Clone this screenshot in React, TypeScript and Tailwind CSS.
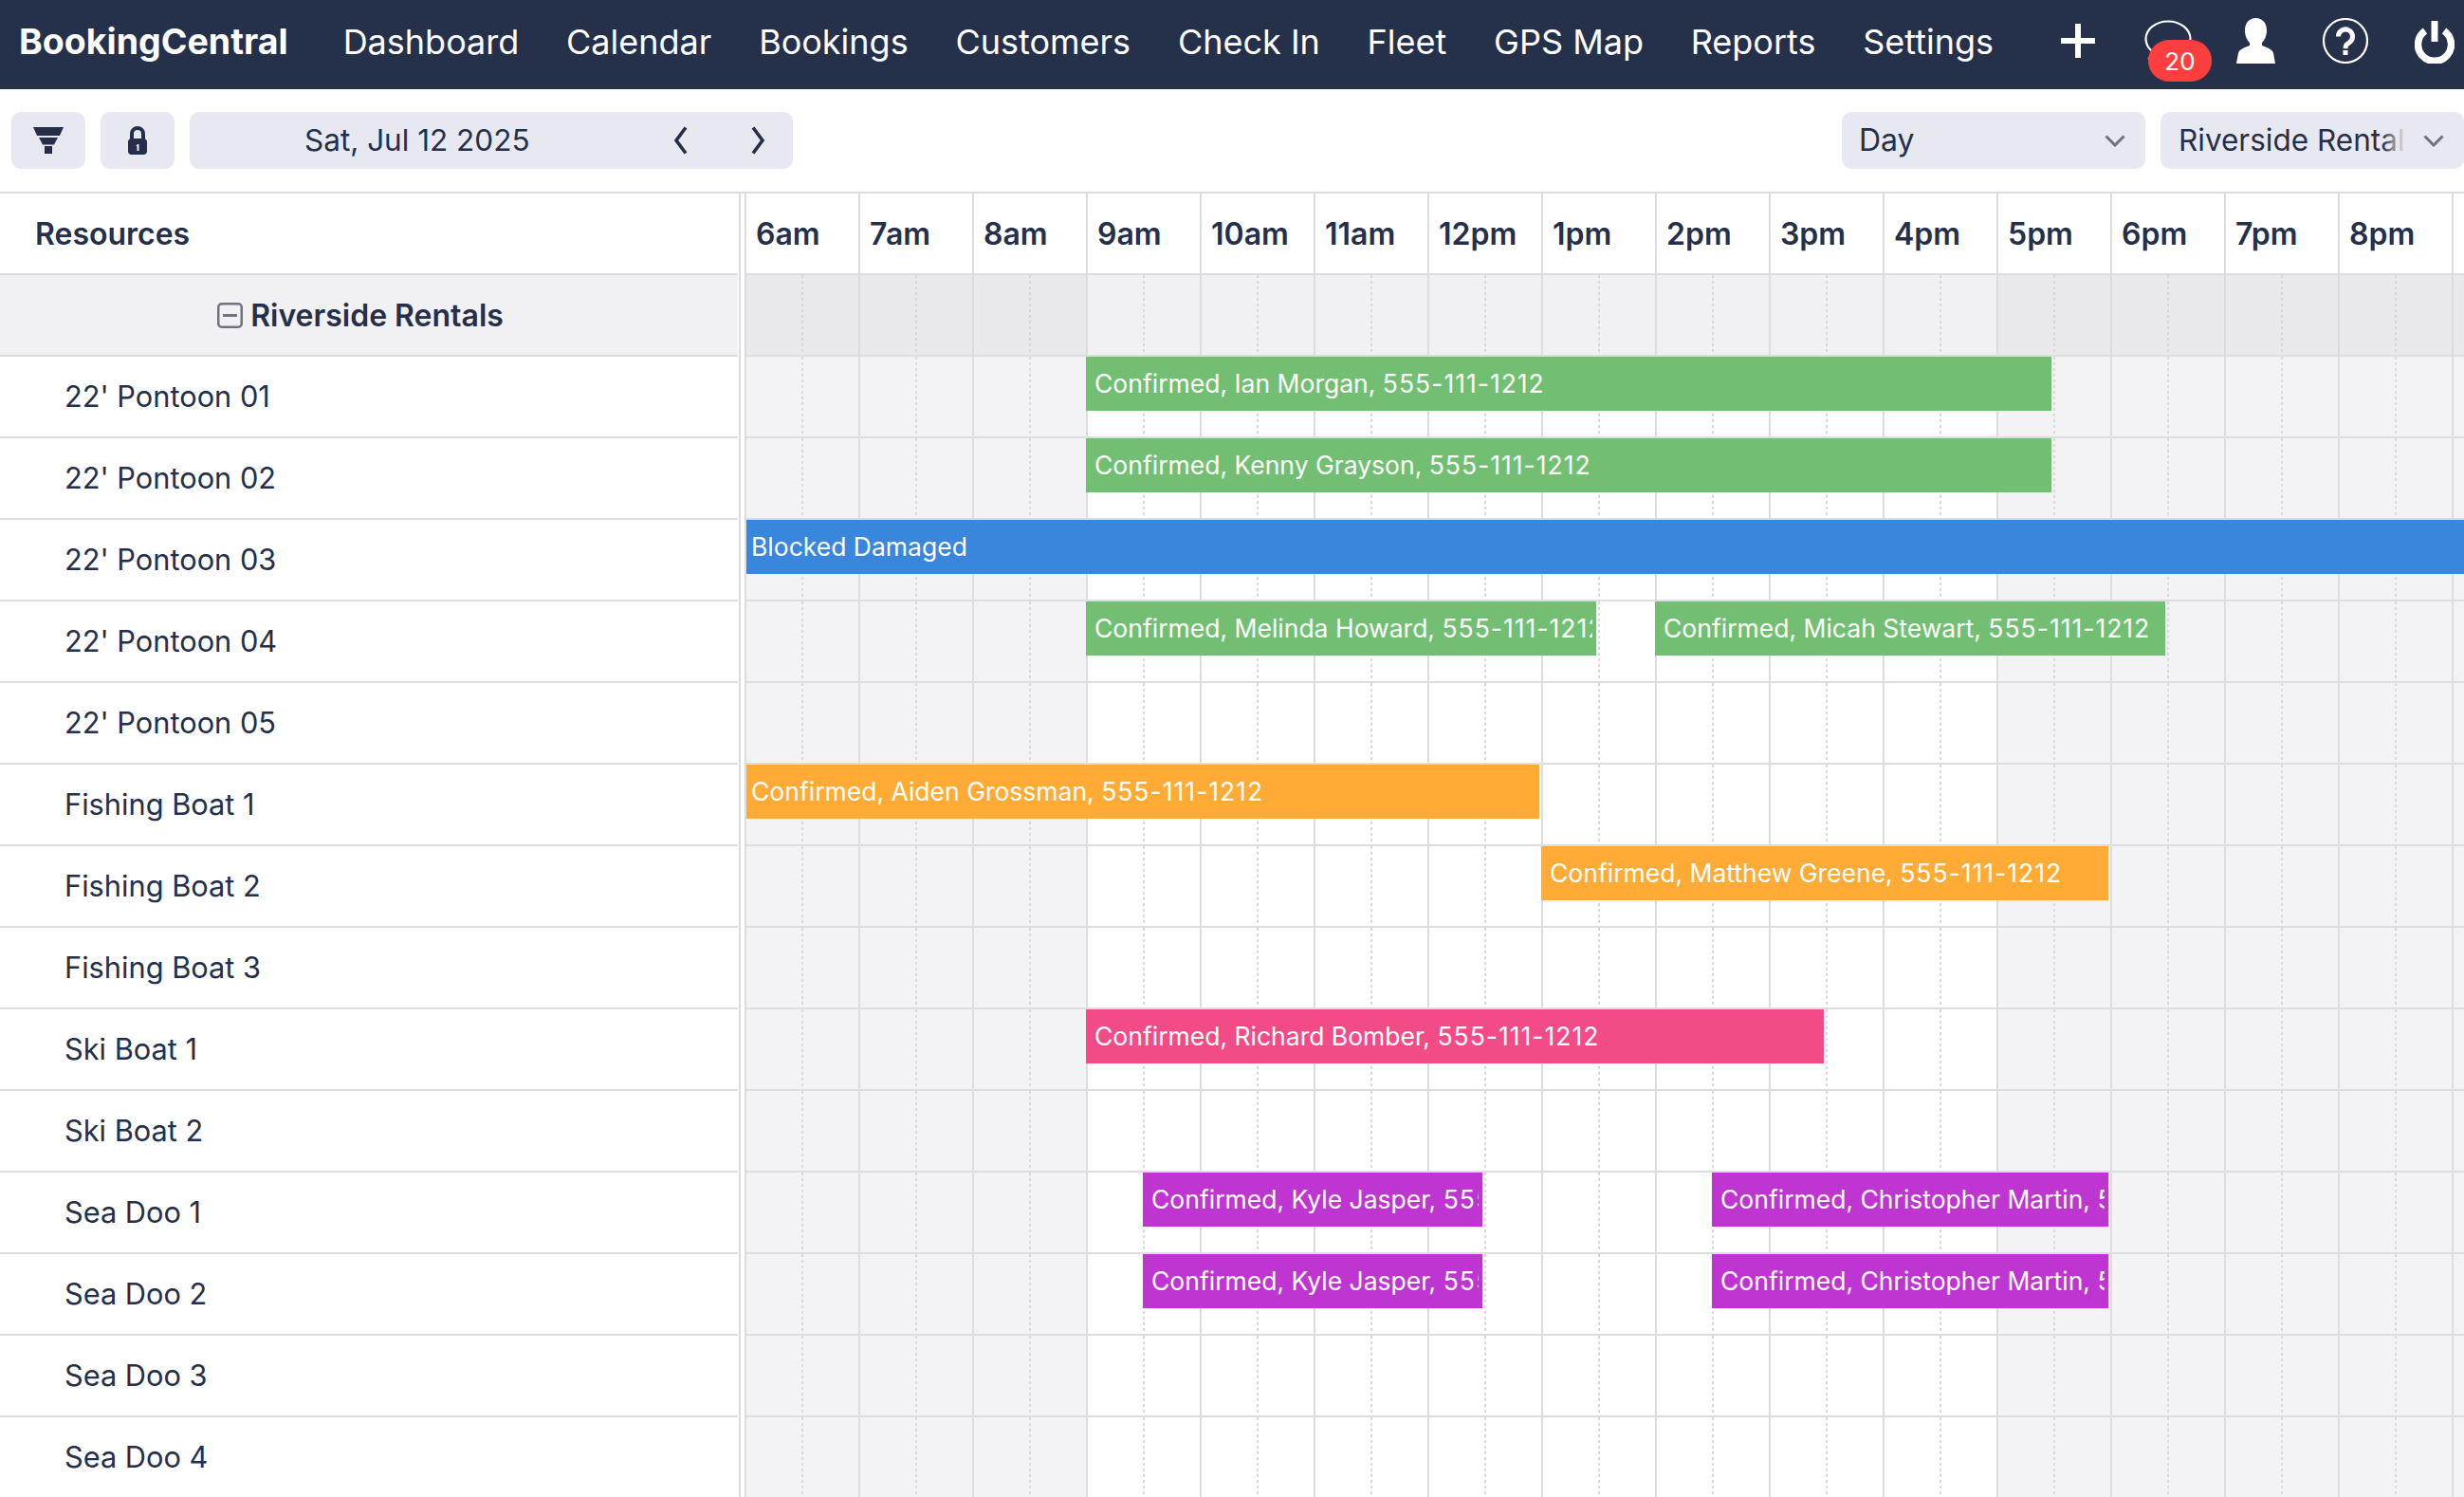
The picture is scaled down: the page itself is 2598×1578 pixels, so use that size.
import type { ReactNode } from "react";

const navItems = ["Dashboard", "Calendar", "Bookings", "Customers", "Check In", "Fleet", "GPS Map", "Reports", "Settings"];
const hours = ["6am", "7am", "8am", "9am", "10am", "11am", "12pm", "1pm", "2pm", "3pm", "4pm", "5pm", "6pm", "7pm", "8pm", "9pm"];

type Booking = { label: string; phone?: string; from: number; to: number; color: string };

const green = "bg-[#72bf73]";
const orange = "bg-[#ffab36]";
const pink = "bg-[#f34b87]";
const purple = "bg-[#bf35d2]";
const phone = "555-111-1212";

const resources: { name: string; bookings: Booking[] }[] = [
  { name: "22' Pontoon 01", bookings: [{ label: "Confirmed, Ian Morgan, ", phone, from: 3, to: 11.5, color: green }] },
  { name: "22' Pontoon 02", bookings: [{ label: "Confirmed, Kenny Grayson, ", phone, from: 3, to: 11.5, color: green }] },
  { name: "22' Pontoon 03", bookings: [{ label: "Blocked Damaged", from: 0, to: 17, color: "bg-[#3986dd]" }] },
  {
    name: "22' Pontoon 04",
    bookings: [
      { label: "Confirmed, Melinda Howard, ", phone, from: 3, to: 7.5, color: green },
      { label: "Confirmed, Micah Stewart, ", phone, from: 8, to: 12.5, color: green },
    ],
  },
  { name: "22' Pontoon 05", bookings: [] },
  { name: "Fishing Boat 1", bookings: [{ label: "Confirmed, Aiden Grossman, ", phone, from: 0, to: 7, color: orange }] },
  { name: "Fishing Boat 2", bookings: [{ label: "Confirmed, Matthew Greene, ", phone, from: 7, to: 12, color: orange }] },
  { name: "Fishing Boat 3", bookings: [] },
  { name: "Ski Boat 1", bookings: [{ label: "Confirmed, Richard Bomber, ", phone, from: 3, to: 9.5, color: pink }] },
  { name: "Ski Boat 2", bookings: [] },
  {
    name: "Sea Doo 1",
    bookings: [
      { label: "Confirmed, Kyle Jasper, ", phone, from: 3.5, to: 6.5, color: purple },
      { label: "Confirmed, Christopher Martin, ", phone, from: 8.5, to: 12, color: purple },
    ],
  },
  {
    name: "Sea Doo 2",
    bookings: [
      { label: "Confirmed, Kyle Jasper, ", phone, from: 3.5, to: 6.5, color: purple },
      { label: "Confirmed, Christopher Martin, ", phone, from: 8.5, to: 12, color: purple },
    ],
  },
  { name: "Sea Doo 3", bookings: [] },
  { name: "Sea Doo 4", bookings: [] },
];

const isOffHours = (i: number) => i < 3 || i >= 11;

function Cells({ group }: { group?: boolean }) {
  return (
    <>
      {hours.map((h, i) => (
        <div
          key={h}
          className={`w-[120px] shrink-0 border-r-2 border-[#dddcdf] ${
            group ? (isOffHours(i) ? "bg-[#e9e8eb]" : "bg-[#f1f0f3]") : isOffHours(i) ? "bg-[#f3f2f5]" : "bg-white"
          }`}
        >
          <div className="ml-[58px] h-full w-[2px] bg-[repeating-linear-gradient(to_bottom,#d9d8db_0,#d9d8db_3px,transparent_3px,transparent_6px)]" />
        </div>
      ))}
    </>
  );
}

function Bar({ b }: { b: Booking }) {
  const left = b.from === 0 ? 0 : b.from * 120 - 2;
  const right = b.to * 120 - 4;
  return (
    <div
      className={`absolute top-0 flex h-[57px] items-center overflow-hidden pr-[4px] text-[26.500px] text-white ${b.color} ${b.from === 0 ? "pl-[5px]" : "pl-[9px]"}`}
      style={{ left, width: right - left }}
    >
      <span className="overflow-hidden whitespace-pre">
        {b.label}
        {b.phone && <span className="tracking-[1px]">{b.phone}</span>}
      </span>
    </div>
  );
}

function ToolButton({ className, children }: { className: string; children: ReactNode }) {
  return <div className={`flex h-[60px] items-center rounded-[10px] bg-[#e8e9f0] ${className}`}>{children}</div>;
}

function Chevron({ d }: { d: string }) {
  return (
    <svg width="16" height="30" viewBox="0 0 16 30" fill="none" stroke="#252f4a" strokeWidth="3.6">
      <path d={d} />
    </svg>
  );
}

function SelectArrow() {
  return (
    <svg width="22" height="13" viewBox="0 0 22 13" fill="none" stroke="#6f7080" strokeWidth="3">
      <path d="M1.5 1.5 11 11l9.5-9.5" />
    </svg>
  );
}

export default function App() {
  return (
    <div className="h-[1578px] w-[2598px] overflow-hidden bg-white text-[#252f4a] [font-family:Inter,sans-serif]">
      <header className="flex h-[94px] items-center overflow-hidden whitespace-nowrap bg-[#25304b] pl-[20px] text-white">
        <div className="mb-[6px] shrink-0 text-[37.500px] font-bold">BookingCentral</div>
        <nav className="mb-[6px] ml-[58px] flex shrink-0 gap-[49.750px] text-[36px]">
          {navItems.map((n) => (
            <span key={n}>{n}</span>
          ))}
        </nav>
        <div className="relative ml-auto h-full w-[490px] shrink-0">
          {/* plus */}
          <svg className="absolute left-[65px] top-[25px]" width="36" height="36" viewBox="0 0 36 36" fill="#fff">
            <rect x="15" width="6" height="36" />
            <rect y="15" width="36" height="6" />
          </svg>
          {/* chat bubble */}
          <svg className="absolute left-[153px] top-[21px]" width="50" height="44" viewBox="0 0 50 44" fill="none" stroke="#fff" strokeWidth="2.2">
            <ellipse cx="25" cy="20" rx="23.5" ry="18.5" />
            <path d="M10 34c0 4-2 6-6 7h9" />
          </svg>
          <div className="absolute left-[157px] top-[42px] flex h-[44px] w-[67px] items-center justify-center rounded-full bg-[#ff3f3f] text-[26px]">
            20
          </div>
          {/* user */}
          <svg className="absolute left-[250px] top-[19px]" width="41" height="48" viewBox="0 0 41 48" fill="#fff">
            <path d="M20.5 0C27 0 32 5 32 13c0 6-2.5 11-5 13v3c5 2 11 4 12 8l2 11H0l2-11c1-4 7-6 12-8v-3c-2.500-2-5-7-5-13C9 5 14 0 20.500 0Z" />
          </svg>
          {/* help */}
          <svg className="absolute left-[341px] top-[19px]" width="48" height="48" viewBox="0 0 48 48" fill="none" stroke="#fff">
            <circle cx="24" cy="24" r="23" strokeWidth="2.2" />
            <path d="M16.500 19.500a7.500 7.500 0 1 1 11.500 6.300c-3 2-4 3-4 6.500" strokeWidth="5" />
            <rect x="21.500" y="34" width="5" height="5" fill="#fff" stroke="none" />
          </svg>
          {/* power */}
          <svg className="absolute left-[438px] top-[22px]" width="42" height="45" viewBox="0 0 42 45" fill="none" stroke="#fff">
            <path d="M11 10.500a17.500 17.500 0 1 0 20 0" strokeWidth="7.500" />
            <path d="M21 0v22" strokeWidth="7" />
          </svg>
        </div>
      </header>

      <div className="flex h-[110px] items-center border-b-2 border-[#dddcdf] text-[32px]">
        <div className="ml-[12px] flex gap-[16px]">
          <ToolButton className="w-[78px] justify-center">
            <svg width="32" height="28" viewBox="0 0 32 28" fill="#252f4a">
              <path d="M0 0h32l-4 9H4zM6 11h20l-4 7.500H10zM12 20h8v8h-8z" />
            </svg>
          </ToolButton>
          <ToolButton className="w-[78px] justify-center">
            <svg width="20" height="30" viewBox="0 0 20 30" fill="none">
              <path d="M4 14V8a6 6 0 0 1 12 0v6" stroke="#252f4a" strokeWidth="4" />
              <rect y="13" width="20" height="17" rx="4" fill="#252f4a" />
              <path d="M8.500 20.500 10 19h1.500v7h-2v-4.500z" fill="#e8e9f0" />
            </svg>
          </ToolButton>
          <ToolButton className="relative w-[636px] pl-[121px]">
            <span className="text-[31.500px]">Sat, Jul 12 2025</span>
            <div className="absolute left-[510px] top-[15px]">
              <Chevron d="M13 1.500 3 15l10 13.500" />
            </div>
            <div className="absolute left-[591px] top-[15px]">
              <Chevron d="M3 1.500 13 15 3 28.500" />
            </div>
          </ToolButton>
        </div>
        <div className="ml-auto flex gap-[16px]">
          <ToolButton className="w-[320px] justify-between pl-[18px] pr-[21px]">
            <span>Day</span>
            <SelectArrow />
          </ToolButton>
          <ToolButton className="w-[320px] justify-between pl-[19px] pr-[21px]">
            <span className="relative w-[240px] overflow-hidden whitespace-nowrap text-[31.500px]">
              Riverside Rentals
              <span className="absolute inset-y-0 right-0 w-[26px] bg-gradient-to-r from-transparent to-[#e8e9f0]" />
            </span>
            <SelectArrow />
          </ToolButton>
        </div>
      </div>

      <div className="flex">
        <div className="w-[779px] shrink-0 pr-px">
          <div className="flex h-[86px] items-center border-b-2 border-[#dddcdf] pl-[37px] pt-[2px] text-[32px] font-semibold">Resources</div>
          <div className="flex h-[86px] items-center justify-center gap-[8px] border-b-2 border-[#dddcdf] bg-[#f1f0f3] pr-[18px] pt-[2px] text-[32px] font-semibold">
            <svg width="27" height="27" viewBox="0 0 27 27" fill="none" stroke="#74727f" className="mb-[2px]">
              <rect x="1.250" y="1.250" width="24.500" height="24.500" rx="3.500" strokeWidth="2.500" />
              <path d="M6 13.500h15" strokeWidth="3" />
            </svg>
            <span>Riverside Rentals</span>
          </div>
          {resources.map((r) => (
            <div key={r.name} className="flex h-[86px] items-center border-b-2 border-[#dddcdf] pl-[68px] pt-[1px] text-[30.750px]">
              {r.name}
            </div>
          ))}
        </div>
        <div className="w-[8px] shrink-0 border-x-2 border-[#dddcdf]" />
        <div className="min-w-0 flex-1 overflow-hidden">
          <div className="flex h-[86px] border-b-2 border-[#dddcdf]">
            {hours.map((h) => (
              <div key={h} className="flex w-[120px] shrink-0 items-center border-r-2 border-[#dddcdf] pl-[10px] pt-[2px] text-[32px] font-semibold">
                {h}
              </div>
            ))}
          </div>
          <div className="flex h-[86px] border-b-2 border-[#dddcdf]">
            <Cells group />
          </div>
          {resources.map((r) => (
            <div key={r.name} className="relative flex h-[86px] border-b-2 border-[#dddcdf]">
              <Cells />
              {r.bookings.map((b) => (
                <Bar key={b.label} b={b} />
              ))}
            </div>
          ))}
        </div>
      </div>
    </div>
  );
}
